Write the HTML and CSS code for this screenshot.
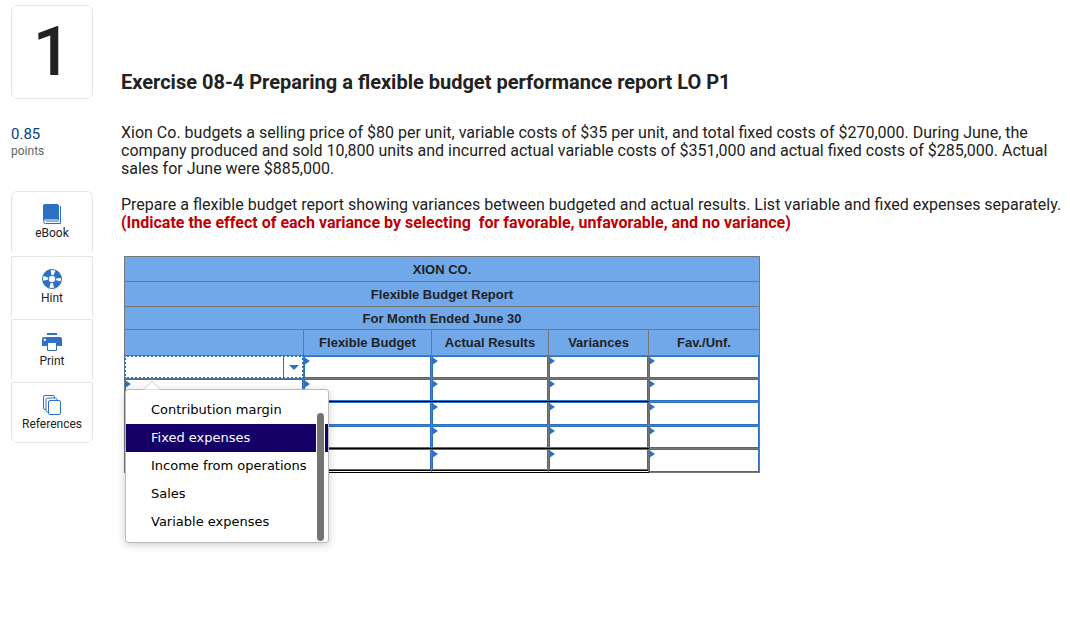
FILE: index.html
```
<!doctype html>
<html lang="en">
    <head>
        <meta charset="utf-8"/>
        <meta name="viewport" content="width=device-width, initial-scale=1"/>
        <title>Exercise 08-4</title>
        <link rel="stylesheet" href="styles.css">
    </head>
    <body>
        <div class="page">
            <aside class="sidebar">
                <div class="number">1</div>
                <p class="score">0.85</p>
                <p class="score-label">points</p>
                <nav class="tools">
                    <button type="button" class="tool">
                        <svg width="20" height="22" viewBox="0 0 20 22">
                            <path d="M3 1h13v15H4q-2 0-3 1.500V3q0-2 2-2z" fill="#2d70c4"/>
                            <path d="M18.500 3v17.500H3.500q-2 0-2-2t2-1.500H16.500V2" fill="none" stroke="#2d70c4"/>
                            <path d="M4 18.500h13" stroke="#8fb3e0"/>
                        </svg>
                        <span>eBook</span>
                    </button>
                    <button type="button" class="tool">
                        <svg width="20" height="22" viewBox="0 0 20 22">
                            <circle cx="10" cy="11" r="9.500" fill="#fff" stroke="#2d70c4"/>
                            <circle cx="10" cy="11" r="6.500" fill="none" stroke="#2d70c4" stroke-width="6" stroke-dasharray="6.600 3.610" stroke-dashoffset="-1.800"/>
                            <circle cx="10" cy="11" r="3.800" fill="#fff" stroke="#2d70c4"/>
                        </svg>
                        <span>Hint</span>
                    </button>
                    <button type="button" class="tool">
                        <svg width="20" height="22" viewBox="0 0 20 22">
                            <path d="M5 2h10v2H5z" fill="#2d70c4"/>
                            <path d="M2 6h16q2 0 2 2v7H0V8q0-2 2-2z" fill="#2d70c4"/>
                            <circle cx="2.800" cy="8.800" r="1.200" fill="#fff"/>
                            <path d="M5.500 11.500h9v8h-9z" fill="#fff" stroke="#2d70c4"/>
                        </svg>
                        <span>Print</span>
                    </button>
                    <button type="button" class="tool">
                        <svg width="20" height="22" viewBox="0 0 20 22" fill="#fff" stroke="#2d70c4">
                            <rect x="1.500" y="1.500" width="11" height="14" rx="1.500"/>
                            <rect x="4" y="4" width="11" height="14" rx="1.500"/>
                            <rect x="6.500" y="6.500" width="12" height="14" rx="1.500"/>
                        </svg>
                        <span>References</span>
                    </button>
                </nav>
            </aside>
            <main class="content">
                <h1>Exercise 08-4 Preparing a flexible budget performance report LO P1</h1>
                <p>Xion Co. budgets a selling price of $80 per unit, variable costs of $35 per unit, and total fixed costs of $270,000. During June, the company produced and sold 10,800 units and incurred actual variable costs of $351,000 and actual fixed costs of $285,000. Actual sales for June were $885,000.</p>
                <p>Prepare a flexible budget report showing variances between budgeted and actual results. List variable and fixed expenses separately. <strong>(Indicate the effect of each variance by selecting&nbsp; for favorable, unfavorable, and no variance)</strong></p>

                <table class="report">
                    <colgroup>
                        <col class="col-item"><col class="col-budget"><col class="col-actual"><col class="col-var"><col class="col-fav">
                    </colgroup>
                    <thead>
                        <tr class="title-row"><th colspan="5">XION CO.</th></tr>
                        <tr class="title-row"><th colspan="5">Flexible Budget Report</th></tr>
                        <tr class="date-row"><th colspan="5">For Month Ended June 30</th></tr>
                        <tr class="head-row">
                            <th></th>
                            <th>Flexible Budget</th>
                            <th>Actual Results</th>
                            <th>Variances</th>
                            <th>Fav./Unf.</th>
                        </tr>
                    </thead>
                    <tbody>
                        <tr>
                            <td class="open">
                                <div class="combo">
                                    <input type="text" aria-label="Line item 1" aria-controls="items">
                                    <button type="button" aria-label="Show items"><svg width="10" height="5" viewBox="0 0 10 5"><path d="M0 0h10L5 5z" fill="#2d70c4"/></svg></button>
                                </div>
                                <div class="menu">
                                    <svg class="caret" width="18" height="10" viewBox="0 0 18 10"><path d="M1 9.500L9 1l8 8.500" fill="#fff" stroke="#ccc"/></svg>
                                    <ul id="items" role="listbox" aria-label="Line items">
                                        <li role="option">Contribution margin</li>
                                        <li role="option" aria-selected="true" class="active">Fixed expenses</li>
                                        <li role="option">Income from operations</li>
                                        <li role="option">Sales</li>
                                        <li role="option">Variable expenses</li>
                                    </ul>
                                    <div class="scrollbar"></div>
                                </div>
                            </td>
                            <td><input type="text" aria-label="Flexible budget 1"></td>
                            <td><input type="text" aria-label="Actual results 1"></td>
                            <td><input type="text" aria-label="Variance 1"></td>
                            <td><input type="text" aria-label="Fav./Unf. 1"></td>
                        </tr>
                        <tr class="subtotal">
                            <td><input type="text" aria-label="Line item 2"></td>
                            <td><input type="text" aria-label="Flexible budget 2"></td>
                            <td><input type="text" aria-label="Actual results 2"></td>
                            <td><input type="text" aria-label="Variance 2"></td>
                            <td><input type="text" aria-label="Fav./Unf. 2"></td>
                        </tr>
                        <tr class="tall">
                            <td><input type="text" aria-label="Line item 3"></td>
                            <td><input type="text" aria-label="Flexible budget 3"></td>
                            <td><input type="text" aria-label="Actual results 3"></td>
                            <td><input type="text" aria-label="Variance 3"></td>
                            <td><input type="text" aria-label="Fav./Unf. 3"></td>
                        </tr>
                        <tr class="subtotal">
                            <td><input type="text" aria-label="Line item 4"></td>
                            <td><input type="text" aria-label="Flexible budget 4"></td>
                            <td><input type="text" aria-label="Actual results 4"></td>
                            <td><input type="text" aria-label="Variance 4"></td>
                            <td><input type="text" aria-label="Fav./Unf. 4"></td>
                        </tr>
                        <tr class="tall total">
                            <td><input type="text" aria-label="Line item 5"></td>
                            <td><input type="text" aria-label="Flexible budget 5"></td>
                            <td><input type="text" aria-label="Actual results 5"></td>
                            <td><input type="text" aria-label="Variance 5"></td>
                            <td><input type="text" aria-label="Fav./Unf. 5"></td>
                        </tr>
                    </tbody>
                </table>
            </main>
        </div>
    </body>
</html>
```
FILE: styles.css
```
* {
    margin: 0;
    padding: 0;
    box-sizing: border-box;
}
body {
    font-family: Roboto, "Liberation Sans", sans-serif;
    font-size: 16px;
    line-height: 18px;
    color: #222;
    background-color: #fff;
}
.page {
    display: flex;
    gap: 28px;
    min-height: 100vh;
    padding: 5px 4px 20px 11px;
}
.sidebar {
    flex: 0 0 82px;
}
.number {
    height: 94px;
    border: 1px solid #e6e6e6;
    border-radius: 6px;
    font-size: 68px;
    font-weight: 500;
    line-height: 92px;
    text-align: center;
}
.score {
    margin-top: 26px;
    color: #003f87;
    font-size: 15px;
}
.score-label {
    color: #666;
    font-size: 12px;
    line-height: 16px;
}
.tools {
    display: flex;
    flex-direction: column;
    gap: 2px;
    margin-top: 32px;
}
.tool {
    display: flex;
    flex-direction: column;
    align-items: center;
    gap: 1px;
    height: 61px;
    padding-top: 11px;
    border: 1px solid #e6e6e6;
    border-bottom: 0;
    background-color: #fff;
    color: #222;
    font-family: inherit;
    font-size: 12px;
    line-height: 14px;
}
.tool:first-child {
    margin-bottom: 2px;
    border-radius: 6px 6px 0 0;
}
.tool:last-child {
    border-bottom: 1px solid #e6e6e6;
    border-radius: 0 0 6px 6px;
}
.content {
    flex: 1;
    min-width: 0;
    padding-top: 67px;
}
h1 {
    margin-bottom: 32px;
    font-size: 20px;
    line-height: 20px;
}
.content p {
    margin-bottom: 18px;
}
.content strong {
    color: #c00000;
}

/* report table */
.report {
    width: 100%;
    max-width: 636px;
    margin: 24px 0 0 3px;
    table-layout: fixed;
    border-collapse: collapse;
    font-family: "Liberation Sans", Arial, sans-serif;
    font-size: 13px;
}
.col-item { width: 179px; }
.col-budget { width: 128px; }
.col-actual { width: 117px; }
.col-var { width: 100px; }
.report th {
    border: 1px solid #777;
    background-color: #70a8ea;
    line-height: 15px;
}
.title-row { height: 25px; }
.date-row { height: 23px; }
.head-row { height: 26px; }
.report td {
    position: relative;
    height: 23px;
    border: 1px solid #777;
    vertical-align: top;
}
.report td::before {
    content: "";
    position: absolute;
    top: 1px;
    left: 0;
    border: 4px solid transparent;
    border-left: 6px solid #2d70c4;
    border-right: 0;
}
.report td.open::before {
    display: none;
}
.report input {
    display: block;
    width: 100%;
    height: 22px;
    padding: 0 8px;
    border: 1px solid #2d70c4;
    font-size: 13px;
}
.report .tall input {
    height: 23px;
}
.report .subtotal td:not(:first-child):not(:last-child),
.report .total td:not(:first-child):not(:last-child) {
    border-bottom-color: #000;
}
.report .total td:not(:first-child):not(:last-child) input {
    height: 21px;
    box-shadow: 0 1px 0 #000;
}

/* open drop-down */
.combo {
    display: flex;
    height: 22px;
    outline: 2px dotted #2d70c4;
    outline-offset: -1px;
}
.report .combo input {
    flex: 1;
    min-width: 0;
    border: 0;
}
.combo button {
    width: 20px;
    border: 0;
    border-left: 1px solid #2d70c4;
    background-color: #fff;
    line-height: 0;
}
.menu {
    position: absolute;
    top: 33px;
    left: 0;
    z-index: 1;
    width: 204px;
    padding: 6px 0;
    border: 1px solid #bbb;
    border-radius: 3px;
    background-color: #fff;
    box-shadow: 0 2px 8px rgba(0, 0, 0, 0.2);
    color: #000;
    font-family: Verdana, "DejaVu Sans", sans-serif;
    line-height: 28px;
}
.menu ul {
    list-style: none;
}
.menu li {
    padding-left: 25px;
    white-space: nowrap;
}
.menu .active {
    background-color: #150068;
    color: #fff;
}
.caret {
    position: absolute;
    top: -10px;
    left: 17px;
}
.scrollbar {
    position: absolute;
    top: 23px;
    right: 3px;
    bottom: 1px;
    width: 9px;
    border: solid #fff;
    border-width: 0 1px;
    border-radius: 4px;
    background-color: #757373;
}
```
